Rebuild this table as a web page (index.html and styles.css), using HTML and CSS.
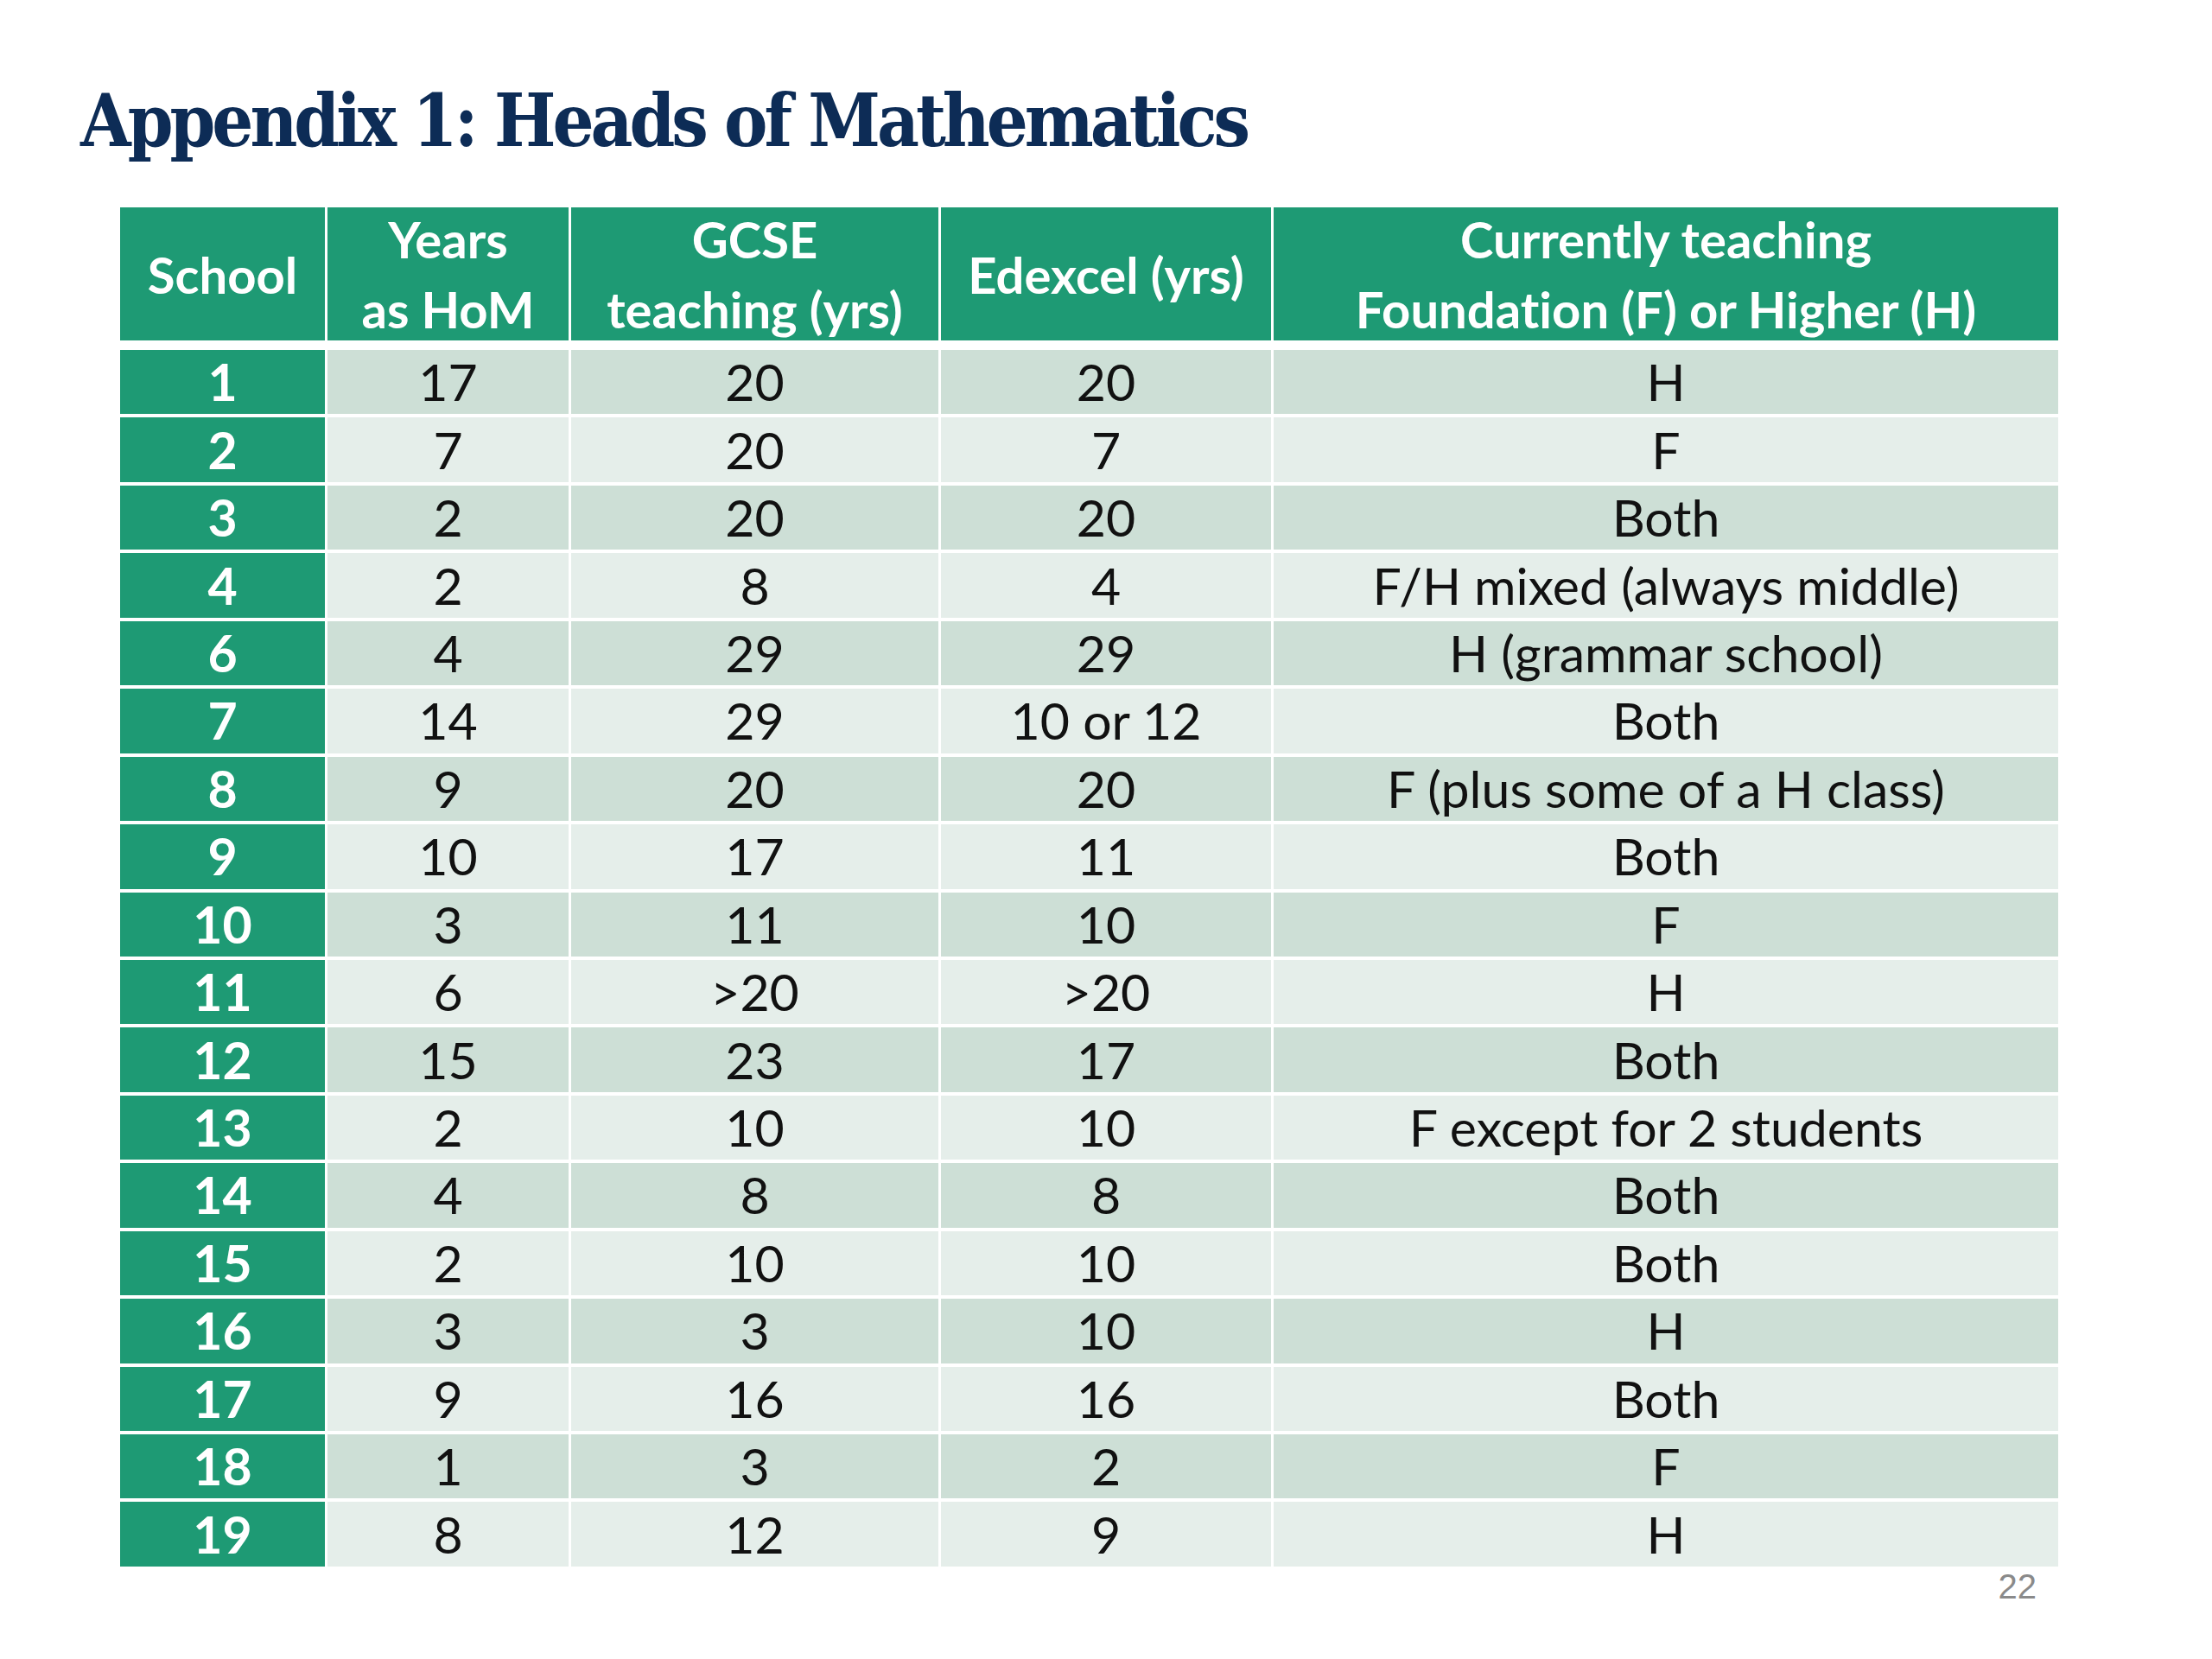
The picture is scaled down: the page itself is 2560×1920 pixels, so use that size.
FILE: index.html
```html
<!DOCTYPE html>
<html lang="en">
<head>
<meta charset="utf-8">
<title>Appendix 1: Heads of Mathematics</title>
<link rel="stylesheet" href="styles.css">
</head>
<body>
<main class="slide">
  <h1 class="title">Appendix 1: Heads of Mathematics</h1>
  <table class="hom">
    <colgroup>
      <col class="c-school"><col class="c-years"><col class="c-gcse"><col class="c-edexcel"><col class="c-current">
    </colgroup>
    <thead>
      <tr>
        <th><div class="hcell">School</div></th>
        <th><div class="hcell">Years<br>as HoM</div></th>
        <th><div class="hcell">GCSE<br>teaching (yrs)</div></th>
        <th><div class="hcell">Edexcel (yrs)</div></th>
        <th><div class="hcell">Currently teaching<br>Foundation (F) or Higher (H)</div></th>
      </tr>
    </thead>
    <tbody>
      <tr><th>1</th><td>17</td><td>20</td><td>20</td><td>H</td></tr>
      <tr><th>2</th><td>7</td><td>20</td><td>7</td><td>F</td></tr>
      <tr><th>3</th><td>2</td><td>20</td><td>20</td><td>Both</td></tr>
      <tr><th>4</th><td>2</td><td>8</td><td>4</td><td>F/H mixed (always middle)</td></tr>
      <tr><th>6</th><td>4</td><td>29</td><td>29</td><td>H (grammar school)</td></tr>
      <tr><th>7</th><td>14</td><td>29</td><td>10 or 12</td><td>Both</td></tr>
      <tr><th>8</th><td>9</td><td>20</td><td>20</td><td>F (plus some of a H class)</td></tr>
      <tr><th>9</th><td>10</td><td>17</td><td>11</td><td>Both</td></tr>
      <tr><th>10</th><td>3</td><td>11</td><td>10</td><td>F</td></tr>
      <tr><th>11</th><td>6</td><td>&gt;20</td><td>&gt;20</td><td>H</td></tr>
      <tr><th>12</th><td>15</td><td>23</td><td>17</td><td>Both</td></tr>
      <tr><th>13</th><td>2</td><td>10</td><td>10</td><td>F except for 2 students</td></tr>
      <tr><th>14</th><td>4</td><td>8</td><td>8</td><td>Both</td></tr>
      <tr><th>15</th><td>2</td><td>10</td><td>10</td><td>Both</td></tr>
      <tr><th>16</th><td>3</td><td>3</td><td>10</td><td>H</td></tr>
      <tr><th>17</th><td>9</td><td>16</td><td>16</td><td>Both</td></tr>
      <tr><th>18</th><td>1</td><td>3</td><td>2</td><td>F</td></tr>
      <tr><th>19</th><td>8</td><td>12</td><td>9</td><td>H</td></tr>
    </tbody>
  </table>
  <div class="page-num">22</div>
</main>
</body>
</html>
```

FILE: styles.css
```css
html, body {
  margin: 0;
  padding: 0;
  background: #ffffff;
}

.slide {
  width: 2560px;
  height: 1920px;
  padding: 0;
  box-sizing: border-box;
  font-family: Lato, "Open Sans", sans-serif;
  font-variant-ligatures: none;
}

.title {
  margin: 0;
  padding: 86px 0 0 93px;
  height: 150px;
  box-sizing: content-box;
  font-family: "DejaVu Serif", serif;
  font-stretch: condensed;
  font-weight: bold;
  font-size: 84px;
  line-height: 108px;
  color: #0d2c56;
  letter-spacing: -4px;
}

.hom {
  margin-left: 136px;
  border-collapse: separate;
  border-spacing: 3px 4px;
  table-layout: fixed;
  width: 2249px;
  margin-top: 0;
}

.c-school { width: 237px; }
.c-years { width: 279px; }
.c-gcse { width: 425px; }
.c-edexcel { width: 382px; }
.c-current { width: 908px; }

.hom thead th {
  background: #1e9a74;
  color: #ffffff;
  font-weight: bold;
  font-size: 58px;
  line-height: 81px;
  height: 154px;
  padding: 0;
  text-align: center;
  vertical-align: middle;
  border-bottom: 7px solid #ffffff;
}

.hcell {
  height: 154px;
  display: flex;
  flex-direction: column;
  justify-content: center;
  align-items: center;
  overflow: visible;
}

.hom tbody th,
.hom tbody td {
  height: 74.45px;
  padding: 0;
  text-align: center;
  vertical-align: middle;
  font-size: 59px;
  line-height: 74px;
}

.hom tbody th {
  background: #1e9a74;
  color: #ffffff;
  font-weight: bold;
}

.hom tbody td {
  color: #111111;
  font-weight: normal;
}

.hom tbody tr:nth-child(odd) td { background: #cddfd6; }
.hom tbody tr:nth-child(even) td { background: #e5eeea; }

.page-num {
  width: 2357px;
  text-align: right;
  margin-top: -4px;
  font-family: "Liberation Sans", Arial, sans-serif;
  font-size: 40px;
  line-height: 46px;
  color: #8a8a8a;
}
```
